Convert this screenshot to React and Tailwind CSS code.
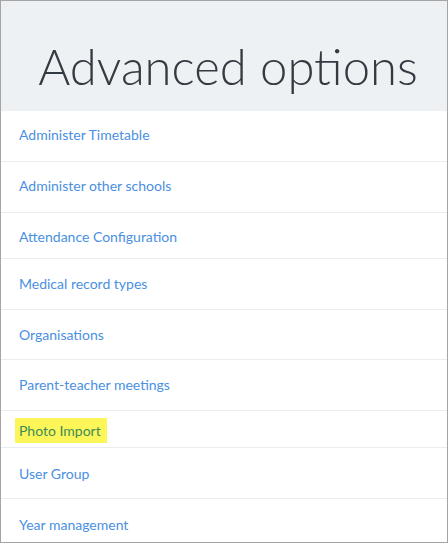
const options = [
  { label: 'Administer Timetable', h: 'h-[51px]', pt: 'pt-[14px]' },
  { label: 'Administer other schools', h: 'h-[51px]', pt: 'pt-[14px]' },
  { label: 'Attendance Configuration', h: 'h-[46px]', pt: 'pt-[14px]' },
  { label: 'Medical record types', h: 'h-[51px]', pt: 'pt-[15px]' },
  { label: 'Organisations', h: 'h-[50px]', pt: 'pt-[15px]' },
  { label: 'Parent-teacher meetings', h: 'h-[51px]', pt: 'pt-[15px]' },
  { label: 'Photo Import', h: 'h-[37px]', pt: 'pt-[7px]', highlight: true },
  { label: 'User Group', h: 'h-[51px]', pt: 'pt-[16px]' },
  { label: 'Year management', h: 'h-[43px]', pt: 'pt-[16px]', last: true },
];

export default function App() {
  return (
    <div className="w-[448px] h-[543px] border border-[#a4a4a4] bg-white overflow-hidden font-['Lato',sans-serif]">
      {/* Header */}
      <div className="h-[110px] bg-[#edf1f4] pt-[35px] pl-[8px] text-center">
        <h1 className="text-[49px] leading-[60px] font-light text-[#343a42]">Advanced options</h1>
      </div>

      {/* Options list */}
      <ul>
        {options.map((opt) => (
          <li
            key={opt.label}
            className={`${opt.h} ${opt.pt} ${opt.last ? '' : 'border-b border-[#e9edf0]'} px-[18px]`}
          >
            {opt.highlight ? (
              <a href="#" className="inline-block -ml-[4px] pl-[4px] pr-[6px] pt-[3px] pb-[2px] bg-[#fcf658] text-[14px] leading-[20px] text-[#3e8c58]">
                {opt.label}
              </a>
            ) : (
              <a href="#" className="block text-[14px] leading-[20px] text-[#4a90e2]">
                {opt.label}
              </a>
            )}
          </li>
        ))}
      </ul>
    </div>
  );
}
